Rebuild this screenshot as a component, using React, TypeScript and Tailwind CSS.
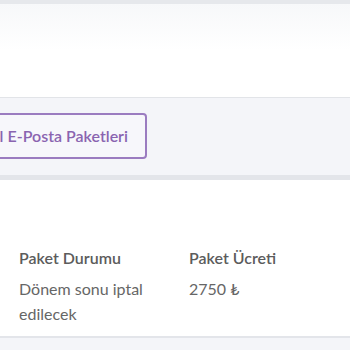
import React from "react";

export default function App() {
  const font = { fontFamily: '"Source Sans Pro", Lato, "Open Sans", sans-serif' };
  return (
    <div className="w-[350px] h-[350px] overflow-hidden bg-[#f4f5f9]" style={font}>
      <div className="h-[4px] bg-[#e6e8ec]" />
      <div className="h-[94px] bg-gradient-to-b from-[#f7f8fa] via-white to-white border-b border-[#e2e4e8]" />
      <div className="h-[77px] flex items-center">
        <div className="w-[147px] flex justify-end mt-[-1px]">
          <button className="shrink-0 h-[46px] pl-[18px] pr-[17px] border-2 border-[#9b7cc0] rounded-[4px] text-[16px] font-semibold text-[#8a64b0] whitespace-nowrap bg-[#f7f7fb]">
            Kurumsal E-Posta Paketleri
          </button>
        </div>
      </div>
      <div className="h-[5px] bg-[#e3e5ea]" />
      <div className="h-[158px] bg-white border-b-2 border-[#e3e5ea] pt-[66px] pl-[19px] flex gap-0">
        <div className="w-[170px]">
          <div className="text-[16px] font-semibold text-[#5c5c5c] leading-[24px]">Paket Durumu</div>
          <div className="text-[16px] text-[#666] leading-[25px] mt-[6px]">Dönem sonu iptal edilecek</div>
        </div>
        <div>
          <div className="text-[16px] font-semibold text-[#5c5c5c] leading-[24px]">Paket Ücreti</div>
          <div className="text-[16px] text-[#666] leading-[25px] mt-[6px]">2750 ₺</div>
        </div>
      </div>
    </div>
  );
}
